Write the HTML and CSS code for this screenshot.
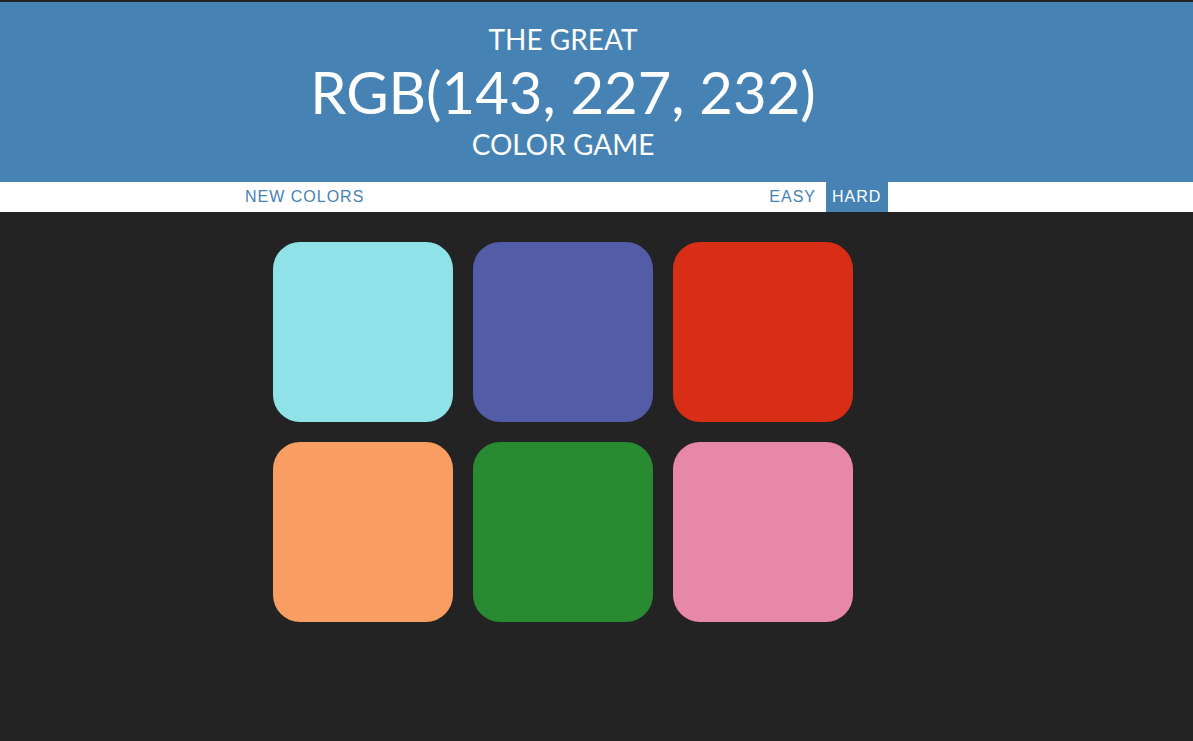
FILE: index.html
```html
<!DOCTYPE html>
<html>
<head>
<meta charset="utf-8">
<link rel="stylesheet" href="styles.css">
</head>
<body>
<header class="header">
  <h1 class="title">
    <span class="title-line">The Great</span>
    <span class="title-rgb">RGB(143, 227, 232)</span>
    <span class="title-line">Color Game</span>
  </h1>
</header>
<nav class="stripe">
  <div class="stripe-inner">
    <button class="btn btn-reset">New Colors</button>
    <span class="message"></span>
    <button class="btn">Easy</button>
    <button class="btn selected">Hard</button>
  </div>
</nav>
<main class="board">
  <div class="grid">
    <div class="square sq1"></div>
    <div class="square sq2"></div>
    <div class="square sq3"></div>
    <div class="square sq4"></div>
    <div class="square sq5"></div>
    <div class="square sq6"></div>
  </div>
</main>
</body>
</html>
```
FILE: styles.css
```css
html, body {
  margin: 0;
  padding: 0;
}
body {
  background: #232323;
  padding-top: 2px;
  height: 739px;
  overflow: hidden;
}
.header {
  background: #4682b4;
  height: 180px;
}
.title {
  margin: 0;
  width: 1126px;
  height: 180px;
  padding: 20px 0;
  box-sizing: border-box;
  display: flex;
  flex-direction: column;
  align-items: center;
  color: #fff;
  font-family: Lato, "Open Sans", sans-serif;
  font-weight: normal;
  text-transform: uppercase;
}
.title-line {
  font-size: 28px;
  line-height: 35px;
}
.title-rgb {
  font-size: 58px;
  line-height: 70px;
}
.stripe {
  background: #fff;
  height: 30px;
}
.stripe-inner {
  height: 30px;
  display: flex;
  padding-left: 240px;
}
.btn {
  border: none;
  background: none;
  margin: 0;
  padding: 0 5px;
  height: 30px;
  font-family: "Liberation Sans", Arial, sans-serif;
  font-size: 16px;
  letter-spacing: 1px;
  text-transform: uppercase;
  color: #4682b4;
}
.btn.selected {
  background: #4682b4;
  color: #fff;
  padding: 0 7px 0 6px;
}
.message {
  width: 395px;
}
.btn + .btn {
  margin-left: 5px;
}
.board {
  width: 1126px;
}
.grid {
  width: 600px;
  margin: 20px auto 0;
  display: grid;
  grid-template-columns: repeat(3, 180px);
  gap: 20px;
  padding: 10px;
  box-sizing: border-box;
}
.square {
  width: 180px;
  height: 180px;
  border-radius: 27px;
}
.sq1 { background: rgb(143, 227, 232); }
.sq2 { background: #535ca6; }
.sq3 { background: #d92e16; }
.sq4 { background: #f89e62; }
.sq5 { background: #288a31; }
.sq6 { background: #e888a8; }
```
